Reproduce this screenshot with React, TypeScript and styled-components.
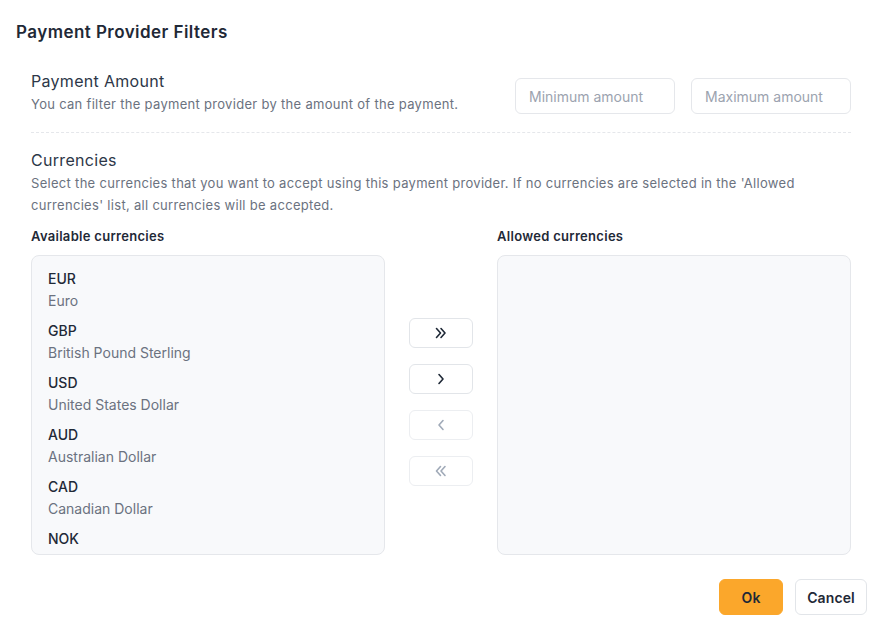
import React from "react";
import styled, { createGlobalStyle } from "styled-components";

const Global = createGlobalStyle`
  html, body { margin: 0; padding: 0; background: #ffffff; }
  body { font-family: "Inter", "Noto Sans", sans-serif; color: #1f2937; letter-spacing: 0.3px; }
  * { box-sizing: border-box; }
`;

const Page = styled.div`
  width: 882px;
  padding: 20px 15px 18px 16px;
`;

const Title = styled.h1`
  margin: 0;
  font-size: 17px;
  line-height: 24px;
  font-weight: 600;
  letter-spacing: 0.45px;
  color: #1f2937;
`;

const Body = styled.div`
  padding: 25px 16px 0 15px;
`;

const AmountRow = styled.div`
  display: flex;
  align-items: flex-end;
  justify-content: space-between;
`;

const SectionHeading = styled.div`
  font-size: 16px;
  line-height: 24px;
  color: #2d3748;
`;

const Description = styled.p`
  margin: 0;
  font-size: 13px;
  line-height: 22px;
  color: #6b7280;
`;

const Inputs = styled.div`
  display: flex;
  gap: 16px;
  margin-bottom: 1px;
`;

const Input = styled.input`
  width: 160px;
  height: 36px;
  border: 1px solid #e5e7eb;
  border-radius: 6px;
  padding: 0 13px;
  font: inherit;
  font-size: 14px;
  letter-spacing: 0;
  color: #1f2937;
  outline: none;
  &::placeholder { color: #9ca3af; }
`;

const Divider = styled.hr`
  border: 0;
  border-top: 1px dashed #e5e7eb;
  margin: 17px 0 15px;
`;

const TransferGrid = styled.div`
  display: grid;
  grid-template-columns: 354px 1fr 354px;
  grid-template-rows: auto 300px;
  row-gap: 9px;
  margin-top: 10px;
`;

const ListLabel = styled.div<{ $col: number }>`
  grid-column: ${(p) => p.$col};
  grid-row: 1;
  font-size: 13px;
  line-height: 20px;
  font-weight: 600;
  color: #1f2937;
`;

const ListBox = styled.div<{ $col: number }>`
  grid-column: ${(p) => p.$col};
  grid-row: 2;
  background: #f8f9fb;
  border: 1px solid #e5e7eb;
  border-radius: 8px;
  padding: 12px 16px;
  overflow: hidden;
  display: flex;
  flex-direction: column;
  gap: 8px;
  letter-spacing: 0;
`;

const Item = styled.div`
  display: flex;
  flex-direction: column;
`;

const Code = styled.div`
  font-size: 14px;
  line-height: 22px;
  font-weight: 500;
  color: #1f2937;
`;

const Name = styled.div`
  font-size: 14px;
  line-height: 22px;
  color: #6b7280;
`;

const Controls = styled.div`
  grid-column: 2;
  grid-row: 2;
  display: flex;
  flex-direction: column;
  align-items: center;
  justify-content: center;
  gap: 16px;
  padding-bottom: 6px;
`;

const MoveButton = styled.button<{ $disabled?: boolean }>`
  width: 64px;
  height: 30px;
  border: 1px solid ${(p) => (p.$disabled ? "#eceef1" : "#e2e5e9")};
  border-radius: 6px;
  background: #ffffff;
  color: ${(p) => (p.$disabled ? "#a0aab8" : "#1f2937")};
  display: flex;
  align-items: center;
  justify-content: center;
  padding: 0;
  cursor: ${(p) => (p.$disabled ? "default" : "pointer")};
`;

const Footer = styled.div`
  display: flex;
  justify-content: flex-end;
  gap: 12px;
  margin-top: 24px;
`;

const ActionButton = styled.button<{ $primary?: boolean }>`
  height: 36px;
  width: ${(p) => (p.$primary ? 64 : 72)}px;
  padding: 0;
  border-radius: 6px;
  border: 1px solid ${(p) => (p.$primary ? "#fba72b" : "#e2e5e9")};
  background: ${(p) => (p.$primary ? "#fba72b" : "#ffffff")};
  color: #1f2937;
  font: inherit;
  font-size: 14px;
  font-weight: 600;
  letter-spacing: 0.1px;
  cursor: pointer;
`;

const Chevron = ({ dir, double }: { dir: "left" | "right"; double?: boolean }) => {
  const single = (x: number) =>
    dir === "right" ? `M${x} 2.5 L${x + 4} 7 L${x} 11.5` : `M${x + 4} 2.5 L${x} 7 L${x + 4} 11.5`;
  return (
    <svg width="14" height="14" viewBox="0 0 14 14" fill="none" stroke="currentColor" strokeWidth="1.6" strokeLinecap="round" strokeLinejoin="round">
      {double ? (
        <>
          <path d={single(2.5)} />
          <path d={single(7)} />
        </>
      ) : (
        <path d={single(5)} />
      )}
    </svg>
  );
};

const currencies = [
  ["EUR", "Euro"],
  ["GBP", "British Pound Sterling"],
  ["USD", "United States Dollar"],
  ["AUD", "Australian Dollar"],
  ["CAD", "Canadian Dollar"],
  ["NOK", "Norwegian Krone"],
];

export default function App() {
  return (
    <Page>
      <Global />
      <Title>Payment Provider Filters</Title>
      <Body>
        <AmountRow>
          <div>
            <SectionHeading>Payment Amount</SectionHeading>
            <Description>You can filter the payment provider by the amount of the payment.</Description>
          </div>
          <Inputs>
            <Input placeholder="Minimum amount" />
            <Input placeholder="Maximum amount" />
          </Inputs>
        </AmountRow>
        <Divider />
        <SectionHeading>Currencies</SectionHeading>
        <Description>
          Select the currencies that you want to accept using this payment provider. If no currencies are selected in the 'Allowed
          currencies' list, all currencies will be accepted.
        </Description>
        <TransferGrid>
          <ListLabel $col={1}>Available currencies</ListLabel>
          <ListLabel $col={3}>Allowed currencies</ListLabel>
          <ListBox $col={1}>
            {currencies.map(([code, name]) => (
              <Item key={code}>
                <Code>{code}</Code>
                <Name>{name}</Name>
              </Item>
            ))}
          </ListBox>
          <Controls>
            <MoveButton><Chevron dir="right" double /></MoveButton>
            <MoveButton><Chevron dir="right" /></MoveButton>
            <MoveButton $disabled><Chevron dir="left" /></MoveButton>
            <MoveButton $disabled><Chevron dir="left" double /></MoveButton>
          </Controls>
          <ListBox $col={3} />
        </TransferGrid>
      </Body>
      <Footer>
        <ActionButton $primary>Ok</ActionButton>
        <ActionButton>Cancel</ActionButton>
      </Footer>
    </Page>
  );
}
